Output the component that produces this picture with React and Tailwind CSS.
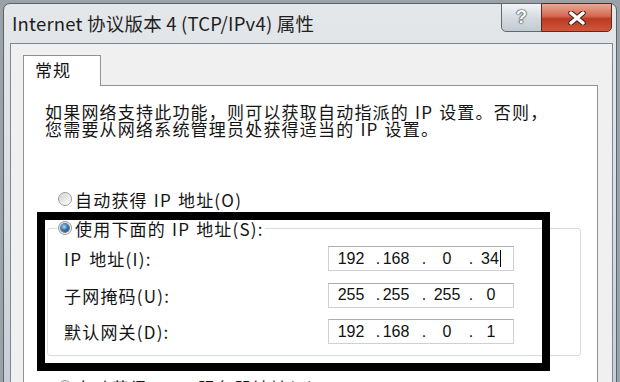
function Radio({ checked }) {
  return (
    <span className="w-[14px] h-[14px] rounded-full border border-[#9a9a9a] bg-gradient-to-br from-[#dcdcdc] to-white flex items-center justify-center shrink-0">
      {checked ? (
        <span className="w-[8px] h-[8px] rounded-full bg-[radial-gradient(circle_at_40%_35%,#b7def8,#3a78ab_45%,#0f2f55)] ring-1 ring-[#5b7d9c]" />
      ) : (
        <span className="w-[10px] h-[10px] rounded-full bg-gradient-to-br from-[#d4d4d4] to-[#fbfbfb]" />
      )}
    </span>
  );
}

// half-width latin inside Chinese text, spaced like the original bitmap font
function Ip() {
  return <span className="mx-[6px]">IP</span>;
}

function IpBox({ parts, caret }) {
  return (
    <div className="w-[186px] h-[25px] border border-[#ccd1d7] border-t-[#abadb3] bg-white flex items-center font-['Liberation_Sans',sans-serif] text-[16px] leading-[18px] tracking-normal text-[#111]">
      <span className="w-[44px] flex justify-center whitespace-nowrap">{parts[0]}</span>
      <span className="w-[10px] flex justify-center">.</span>
      <span className="w-[26px] flex justify-center whitespace-nowrap">{parts[1]}</span>
      <span className="w-[30px] flex justify-center">.</span>
      <span className="w-[16px] flex justify-center whitespace-nowrap">{parts[2]}</span>
      <span className="w-[32px] flex justify-center">.</span>
      <span className="w-[8px] flex justify-center items-center whitespace-nowrap">
        {parts[3]}
        {caret && <span className="w-[1px] h-[17px] bg-black ml-[1px] shrink-0" />}
      </span>
    </div>
  );
}

function IpRow({ label, parts, caret }) {
  return (
    <div className="flex items-center h-[25px]">
      <span className="w-[264px]">{label}</span>
      <IpBox parts={parts} caret={caret} />
    </div>
  );
}

export default function App() {
  return (
    <div className="w-[620px] h-[382px] overflow-hidden bg-[#9aa1a7] relative font-['Noto_Sans_CJK_SC',sans-serif] text-[#141414]">
      <div className="ml-[3px] mt-[3px] w-[614px] h-[420px] rounded-t-[7px] border border-[#5a636c] bg-gradient-to-b from-[#e4e7ea] via-[#dadee2] to-[#c3cad0] flex flex-col">
        {/* Title bar */}
        <div className="h-[39px] flex items-start justify-between shrink-0">
          <div className="pl-[8px] pt-[6px] text-[18.5px] leading-[26px] tracking-[0.2px] text-[#1e1e1e]">
            Internet 协议版本 4 (TCP/IPv4) 属性
          </div>
          <div className="flex mr-[4px] -mt-px">
            <div className="w-[41px] h-[29px] rounded-bl-[5px] border border-[#5f6a74] bg-gradient-to-b from-[#f2f4f6] via-[#d5dbe0] to-[#c2cad1] flex items-center justify-center text-white font-bold text-[18px] font-['Liberation_Sans',sans-serif] [text-shadow:0_0_1px_#2b3a48,0_0_1px_#2b3a48,0_0_2px_#2b3a48]">
              ?
            </div>
            <div className="w-[71px] h-[29px] -ml-px rounded-br-[5px] border border-[#5a2a20] bg-[linear-gradient(#eaa896,#d36a52_45%,#bb3a22_55%,#d0573c)] flex items-center justify-center">
              <svg width="18" height="14" viewBox="0 0 18 14">
                <path d="M3 2 L15 12 M15 2 L3 12" stroke="#4a1d14" strokeWidth="5.5" strokeLinecap="round" />
                <path d="M3 2 L15 12 M15 2 L3 12" stroke="#ffffff" strokeWidth="3.5" strokeLinecap="round" />
              </svg>
            </div>
          </div>
        </div>

        {/* Client area */}
        <div className="ml-[6px] mr-[3px] flex-1 bg-[#f0f0f0] border border-[#7d8892] pt-[11px] pl-[12px]">
          {/* Tab strip */}
          <div className="flex">
            <div className="w-[78px] h-[31px] bg-white border border-b-0 border-[#8e9199] -mb-px relative z-10 pl-[11px] pt-[3px] text-[17px] leading-[22px] tracking-[1px]">
              常规
            </div>
          </div>

          {/* Tab page */}
          <div className="w-[575px] h-[320px] bg-white border border-[#8e9199] text-[17px] leading-[17px] tracking-[1.2px]">
            <p className="pl-[21px] pt-[17px]">
              如果网络支持此功能，则可以获取自动指派的<Ip />设置。否则，
              <br />
              您需要从网络系统管理员处获得适当的<Ip />设置。
            </p>

            <div className="mt-[52px] ml-[34px] h-[20px] flex items-center gap-[3px]">
              <Radio />
              <span>自动获得<Ip />地址(O)</span>
            </div>

            <fieldset className="ml-[23px] w-[534px] mt-[9px] border border-[#d5dde3] rounded-[3px] pl-[16px] pb-[11px]">
              <legend className="-ml-[7px] px-[1px] h-[20px] flex items-center gap-[3px]">
                <Radio checked />
                <span>使用下面的<Ip />地址(S):</span>
              </legend>
              <div className="pt-[8px] flex flex-col gap-[11.5px]">
                <IpRow label={<>IP<span className="ml-[7px]">地址(I):</span></>} parts={["192", "168", "0", "34"]} caret />
                <IpRow label="子网掩码(U):" parts={["255", "255", "255", "0"]} />
                <IpRow label="默认网关(D):" parts={["192", "168", "0", "1"]} />
              </div>
            </fieldset>

            <div className="mt-[21px] ml-[34px] h-[20px] flex items-center gap-[3px]">
              <Radio />
              <span>自动获得<span className="mx-[6px]">DNS</span>服务器地址(B)</span>
            </div>
          </div>
        </div>
      </div>

      {/* Highlight box drawn over the dialog */}
      <div className="absolute left-[37px] top-[212px] w-[513px] h-[159px] border-[8px] border-black" />
    </div>
  );
}
